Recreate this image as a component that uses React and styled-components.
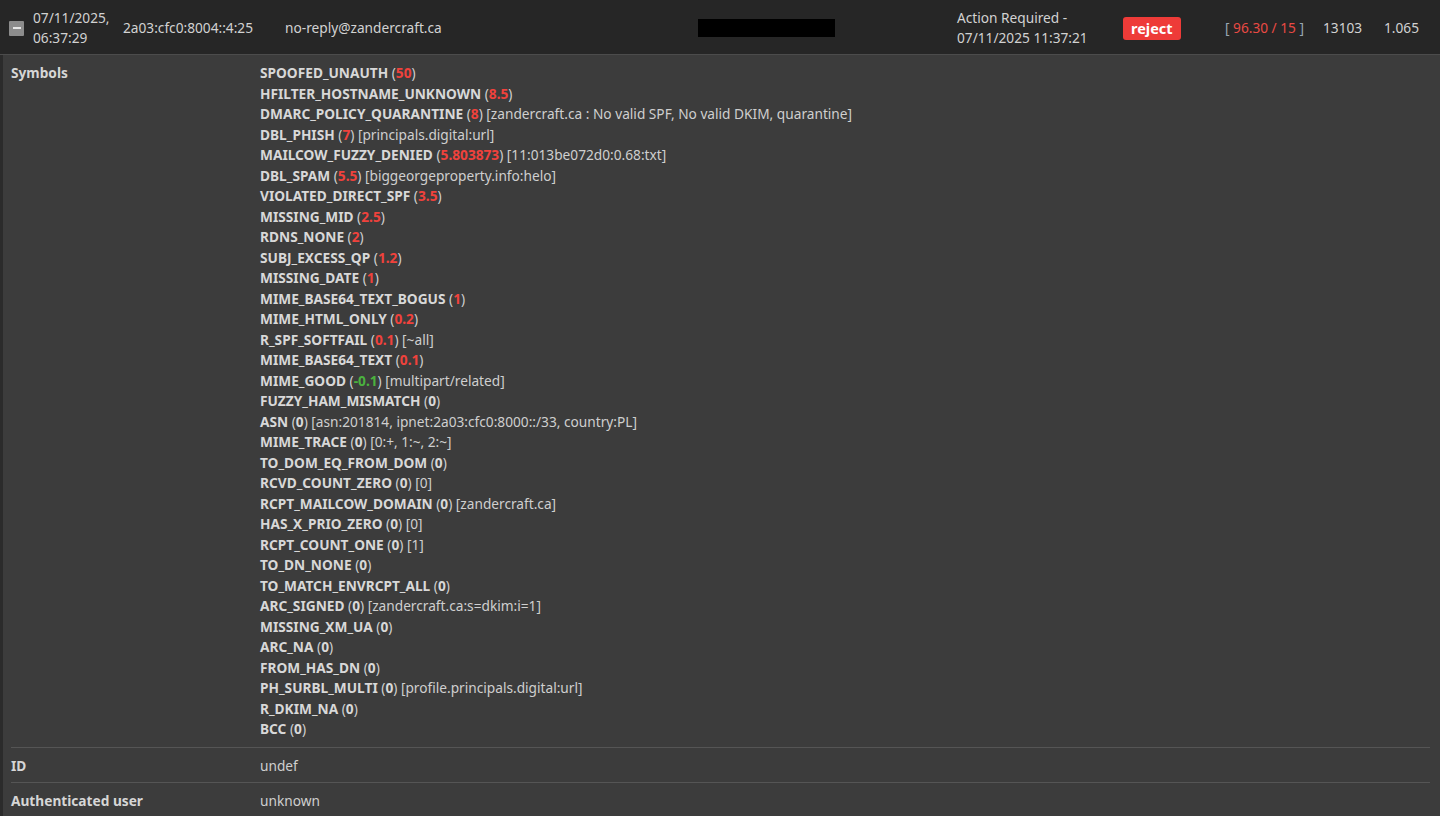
import React from 'react';
import styled, { createGlobalStyle } from 'styled-components';

const GlobalStyle = createGlobalStyle`
    html, body {
        margin: 0;
        padding: 0;
        background-color: #3c3c3c;
    }
    body {
        font-family: "Noto Sans", "Open Sans", sans-serif;
        font-size: 13.7px;
        color: #d4d4d4;
    }
`;

const Page = styled.div`
    min-height: 816px;
    background-color: #3c3c3c;
    border-left: 3px solid #2b2b2b;
    box-sizing: border-box;
`;

const HeaderRow = styled.div`
    display: grid;
    grid-template-columns: 33px 90px 162px 413px 259px 166px 102px 98px 61px 1fr;
    align-items: center;
    height: 55px;
    padding-top: 2px;
    box-sizing: border-box;
    margin-left: -3px;
    background-color: #262626;
    border-bottom: 1px solid #4c4c4c;
    color: #d2d2d2;
    line-height: 20px;
`;

const Cell = styled.div`
    white-space: nowrap;
`;

const Toggle = styled.div`
    width: 15px;
    height: 15px;
    margin-left: 9px;
    background-color: #8c8c8c;
    border-radius: 1px;
    display: flex;
    align-items: center;
    justify-content: center;

    &::after {
        content: '';
        width: 8px;
        height: 2px;
        background-color: #e6e6e6;
    }
`;

const Redacted = styled.div`
    width: 137px;
    height: 18px;
    background-color: #000;
`;

const Badge = styled.span`
    display: inline-block;
    background-color: #ee3b38;
    color: #fff;
    font-weight: 700;
    font-size: 14.5px;
    line-height: 23px;
    padding: 0 8px;
    border-radius: 3px;
`;

const Score = styled.span`
    color: #9aa7b3;

    b {
        font-weight: 400;
        color: #ea4a44;
    }
`;

const DetailTable = styled.div`
    display: flex;
    flex-direction: column;
    padding: 0 10px 0 8px;
`;

const DetailRow = styled.div`
    display: grid;
    grid-template-columns: 249px 1fr;
    padding: 8px 0 ${props => props.divided ? 6 : 7}px;
    line-height: 20.5px;
    border-top: ${props => props.divided ? '1px solid #555' : 'none'};
`;

const Label = styled.div`
    font-weight: 700;
    color: #d6d6d6;
`;

const Value = styled.div`
    color: #cfcfcf;
`;

const SymbolLine = styled.div`
    white-space: nowrap;

    strong {
        font-weight: 700;
        color: #d8d8d8;
    }
`;

const Weight = styled.strong`
    && {
        color: ${props => props.tone === 'bad' ? '#f0423c' : props.tone === 'good' ? '#4bb23f' : '#d8d8d8'};
    }
`;

const symbols = [
    ['SPOOFED_UNAUTH', '50'],
    ['HFILTER_HOSTNAME_UNKNOWN', '8.5'],
    ['DMARC_POLICY_QUARANTINE', '8', 'zandercraft.ca : No valid SPF, No valid DKIM, quarantine'],
    ['DBL_PHISH', '7', 'principals.digital:url'],
    ['MAILCOW_FUZZY_DENIED', '5.803873', '11:013be072d0:0.68:txt'],
    ['DBL_SPAM', '5.5', 'biggeorgeproperty.info:helo'],
    ['VIOLATED_DIRECT_SPF', '3.5'],
    ['MISSING_MID', '2.5'],
    ['RDNS_NONE', '2'],
    ['SUBJ_EXCESS_QP', '1.2'],
    ['MISSING_DATE', '1'],
    ['MIME_BASE64_TEXT_BOGUS', '1'],
    ['MIME_HTML_ONLY', '0.2'],
    ['R_SPF_SOFTFAIL', '0.1', '~all'],
    ['MIME_BASE64_TEXT', '0.1'],
    ['MIME_GOOD', '-0.1', 'multipart/related'],
    ['FUZZY_HAM_MISMATCH', '0'],
    ['ASN', '0', 'asn:201814, ipnet:2a03:cfc0:8000::/33, country:PL'],
    ['MIME_TRACE', '0', '0:+, 1:~, 2:~'],
    ['TO_DOM_EQ_FROM_DOM', '0'],
    ['RCVD_COUNT_ZERO', '0', '0'],
    ['RCPT_MAILCOW_DOMAIN', '0', 'zandercraft.ca'],
    ['HAS_X_PRIO_ZERO', '0', '0'],
    ['RCPT_COUNT_ONE', '0', '1'],
    ['TO_DN_NONE', '0'],
    ['TO_MATCH_ENVRCPT_ALL', '0'],
    ['ARC_SIGNED', '0', 'zandercraft.ca:s=dkim:i=1'],
    ['MISSING_XM_UA', '0'],
    ['ARC_NA', '0'],
    ['FROM_HAS_DN', '0'],
    ['PH_SURBL_MULTI', '0', 'profile.principals.digital:url'],
    ['R_DKIM_NA', '0'],
    ['BCC', '0'],
];

function tone(score) {
    const n = parseFloat(score);
    if (n > 0) return 'bad';
    if (n < 0) return 'good';
    return 'zero';
}

export default function App() {
    return (
        <Page>
            <GlobalStyle />
            <HeaderRow>
                <Cell><Toggle /></Cell>
                <Cell>07/11/2025,<br />06:37:29</Cell>
                <Cell>2a03:cfc0:8004::4:25</Cell>
                <Cell>no-reply@zandercraft.ca</Cell>
                <Cell><Redacted /></Cell>
                <Cell>Action Required -<br />07/11/2025 11:37:21</Cell>
                <Cell><Badge>reject</Badge></Cell>
                <Cell><Score>[ <b>96.30 / 15</b> ]</Score></Cell>
                <Cell>13103</Cell>
                <Cell>1.065</Cell>
            </HeaderRow>
            <DetailTable>
                <DetailRow>
                    <Label>Symbols</Label>
                    <Value>
                        {symbols.map(([name, score, opt]) => (
                            <SymbolLine key={name}>
                                <strong>{name}</strong> (<Weight tone={tone(score)}>{score}</Weight>){opt ? ` [${opt}]` : ''}
                            </SymbolLine>
                        ))}
                    </Value>
                </DetailRow>
                <DetailRow divided>
                    <Label>ID</Label>
                    <Value>undef</Value>
                </DetailRow>
                <DetailRow divided>
                    <Label>Authenticated user</Label>
                    <Value>unknown</Value>
                </DetailRow>
            </DetailTable>
        </Page>
    );
}
